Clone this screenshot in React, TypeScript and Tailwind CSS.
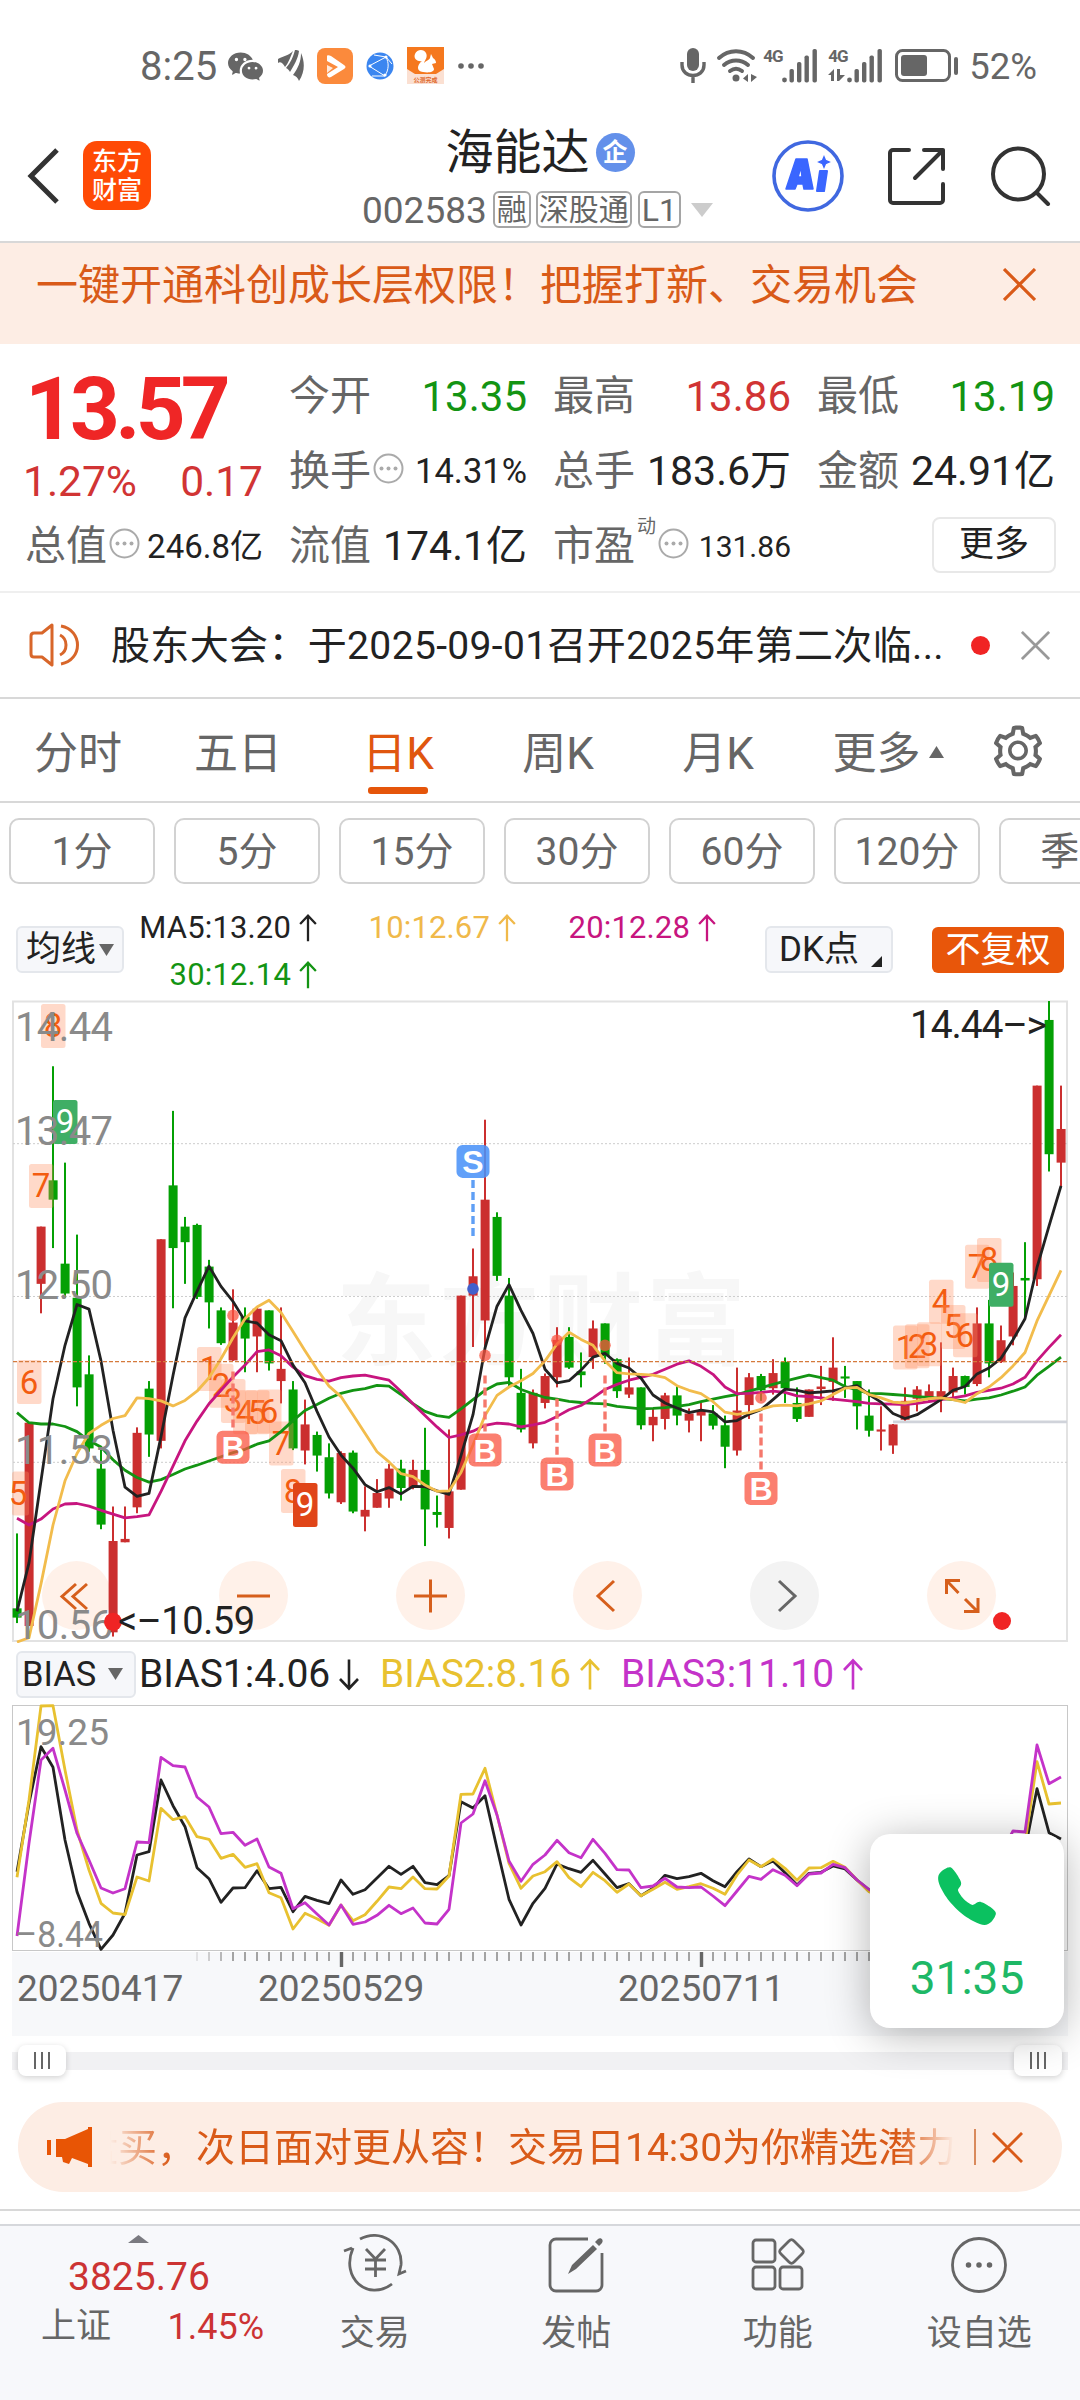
import React, { useState } from 'react';
import clsx from 'clsx';
import { AiOutlineSetting } from 'react-icons/ai';
import { BsWechat } from 'react-icons/bs';
import { IoCall } from 'react-icons/io5';

type Candle = [high: number, top: number, bottom: number, low: number, up: 0 | 1];

// chart values are stored on the plot's own vertical scale, one entry per trading day
const candles: Candle[] = [
  [1290, 1468, 1490, 1503, 0], [1027, 1027, 1510, 1510, 1], [561, 561, 697, 767, 1], [180, 451, 497, 612, 0],
  [409, 649, 720, 730, 0], [580, 730, 943, 988, 0], [867, 912, 1088, 1096, 0], [1090, 1136, 1269, 1280, 0],
  [1226, 1308, 1525, 1535, 1], [1226, 1303, 1311, 1311, 1], [1038, 1051, 1228, 1242, 1], [928, 946, 1055, 1108, 0],
  [591, 591, 1070, 1088, 1], [286, 463, 612, 755, 0], [538, 561, 598, 697, 0], [554, 557, 728, 733, 0],
  [640, 656, 741, 803, 0], [753, 760, 838, 842, 0], [710, 789, 879, 880, 1], [753, 775, 827, 907, 0],
  [753, 756, 822, 907, 1], [760, 760, 886, 903, 0], [753, 899, 928, 981, 1], [928, 948, 1088, 1092, 0],
  [972, 1031, 1093, 1126, 1], [1048, 1056, 1105, 1143, 0], [1076, 1109, 1195, 1207, 0], [1095, 1099, 1216, 1220, 1],
  [1093, 1098, 1238, 1242, 0], [1178, 1234, 1250, 1285, 1], [1161, 1194, 1229, 1229, 1], [1125, 1136, 1207, 1229, 1],
  [1115, 1136, 1182, 1212, 0], [1115, 1139, 1180, 1185, 1], [1039, 1139, 1233, 1320, 0], [1200, 1239, 1246, 1276, 0],
  [1043, 1190, 1277, 1302, 1], [725, 725, 1186, 1186, 1], [613, 679, 725, 847, 1], [307, 497, 784, 860, 1],
  [527, 538, 678, 690, 0], [683, 725, 919, 940, 0], [899, 956, 1043, 1050, 0], [948, 956, 1076, 1088, 1],
  [910, 916, 980, 993, 1], [800, 830, 919, 943, 1], [800, 823, 896, 899, 0], [860, 905, 914, 943, 0],
  [784, 803, 871, 899, 1], [791, 791, 869, 887, 0], [874, 876, 952, 968, 0], [872, 943, 960, 968, 1],
  [943, 943, 1033, 1043, 0], [993, 1013, 1033, 1071, 1], [956, 962, 1018, 1043, 1], [940, 962, 1010, 1033, 0],
  [993, 1005, 1022, 1050, 1], [980, 998, 1010, 1071, 1], [985, 1005, 1034, 1043, 0], [1010, 1033, 1084, 1135, 0],
  [896, 998, 1093, 1105, 1], [909, 919, 985, 1018, 1], [911, 916, 950, 975, 0], [876, 909, 945, 960, 1],
  [872, 882, 945, 980, 0], [943, 980, 1018, 1025, 0], [948, 948, 1013, 1013, 1], [892, 941, 947, 985, 1],
  [824, 896, 930, 975, 1], [892, 917, 922, 968, 0], [928, 928, 988, 1043, 0], [948, 1010, 1046, 1060, 0],
  [988, 1043, 1048, 1093, 1], [1030, 1031, 1081, 1101, 1], [943, 975, 1020, 1022, 1], [940, 948, 970, 1000, 1],
  [936, 952, 970, 975, 1], [836, 952, 968, 1002, 1], [896, 916, 955, 968, 1], [915, 916, 942, 960, 0],
  [753, 791, 935, 940, 1], [735, 791, 886, 919, 0], [796, 831, 883, 885, 1], [670, 702, 822, 843, 1],
  [598, 683, 689, 780, 0], [226, 226, 686, 702, 1], [25, 70, 389, 430, 0], [226, 329, 409, 465, 1],
];

const movingAverages = [
  {
    color: '#139413',
    values: [
      1003, 1027, 1030, 1030, 1036, 1048, 1070, 1085, 1115, 1140, 1157, 1168, 1162, 1150, 1137, 1128, 1118, 1108, 1098,
      1090, 1078, 1070, 1048, 1022, 998, 984, 969, 957, 950, 946, 938, 940, 960, 982, 1000, 1010, 1014, 994, 972, 950,
      935, 931, 948, 958, 967, 971, 976, 979, 981, 982, 988, 991, 994, 993, 991, 988, 984, 977, 971, 965, 960, 952, 944,
      936, 928, 921, 914, 920, 926, 941, 949, 957, 958, 960, 962, 965, 967, 969, 972, 975, 971, 968, 961, 952, 942, 914,
      893, 871,
    ],
  },
  {
    color: '#c7157f',
    values: [
      1254, 1270, 1256, 1232, 1220, 1219, 1225, 1235, 1244, 1253, 1250, 1246, 1190, 1130, 1070, 1023, 982, 950, 918, 890,
      858, 854, 868, 895, 915, 924, 928, 920, 916, 914, 920, 926, 953, 982, 1010, 1037, 1062, 1056, 1047, 1033, 1028,
      1030, 1037, 1032, 1026, 1012, 996, 986, 968, 948, 936, 926, 919, 912, 900, 888, 880, 893, 912, 942, 958, 957, 955,
      952, 955, 963, 965, 968, 971, 974, 977, 981, 982, 983, 984, 981, 977, 972, 968, 963, 955, 950, 945, 935, 919, 880,
      848, 818,
    ],
  },
  {
    color: '#222222',
    values: [
      1475, 1360, 1165, 970, 843, 746, 757, 880, 1045, 1180, 1202, 1195, 1060, 915, 778, 715, 655, 703, 739, 785, 790,
      818, 832, 890, 932, 1000, 1061, 1104, 1135, 1174, 1191, 1181, 1196, 1178, 1179, 1189, 1197, 1105, 1008, 850, 750,
      699, 760, 815, 900, 932, 927, 902, 871, 862, 886, 897, 921, 961, 980, 992, 1003, 997, 1001, 1025, 1022, 1007, 996,
      972, 947, 950, 956, 954, 951, 944, 939, 960, 978, 1005, 1017, 1008, 990, 972, 950, 941, 911, 897, 874, 830, 780,
      658, 560, 464,
    ],
  },
  {
    color: '#f2bc4c',
    values: [
      1548, 1538, 1410, 1270, 1165, 1100, 1052, 1033, 1017, 1010, 968, 970, 975, 987, 974, 952, 920, 875, 825, 780, 752,
      736, 765, 810, 856, 900, 940, 965, 1008, 1052, 1096, 1120, 1148, 1155, 1175, 1190, 1189, 1145, 1080, 1010, 962,
      942, 927, 910, 880, 840, 812, 829, 843, 880, 908, 911, 912, 914, 920, 939, 950, 958, 977, 1002, 1007, 1003, 995,
      987, 985, 987, 982, 975, 960, 945, 943, 960, 968, 978, 980, 975, 970, 968, 972, 979, 958, 942, 920, 892, 860, 785,
      725, 665,
    ],
  },
];

const biasLines = [
  {
    color: '#222222',
    values: [
      695, 490, 320, 382, 600, 755, 850, 928, 885, 820, 645, 635, 420, 497, 560, 683, 716, 787, 744, 743, 692, 746, 742,
      815, 769, 781, 791, 720, 763, 749, 714, 679, 703, 679, 728, 734, 707, 485, 504, 467, 625, 778, 855, 790, 745, 672,
      686, 697, 661, 702, 743, 731, 767, 745, 706, 716, 710, 700, 722, 740, 695, 657, 680, 663, 698, 735, 700, 697, 678,
      687, 720, 750, 770, 760, 750, 740, 730, 735, 730, 720, 700, 690, 680, 660, 630, 446, 578, 597,
    ],
  },
  {
    color: '#e8c130',
    values: [
      712, 480, 198, 197, 390, 570, 690, 790, 819, 824, 711, 723, 505, 539, 530, 590, 598, 655, 643, 682, 671, 758, 773,
      867, 820, 836, 856, 795, 842, 824, 784, 741, 746, 711, 746, 747, 708, 463, 462, 385, 525, 670, 745, 708, 695, 665,
      713, 740, 697, 722, 757, 732, 767, 748, 727, 748, 740, 731, 745, 763, 705, 660, 680, 657, 685, 721, 684, 683, 664,
      682, 720, 755, 770, 760, 750, 740, 730, 735, 730, 720, 700, 680, 660, 640, 610, 365, 492, 489,
    ],
  },
  {
    color: '#c433c9',
    values: [
      888, 610, 360, 325, 450, 580, 660, 744, 759, 746, 606, 608, 352, 377, 381, 471, 501, 581, 577, 616, 597, 681, 700,
      806, 788, 822, 855, 795, 853, 846, 826, 796, 821, 804, 849, 852, 808, 549, 522, 422, 525, 663, 724, 673, 645, 601,
      638, 653, 598, 640, 689, 690, 743, 738, 715, 741, 743, 741, 768, 797, 753, 709, 718, 689, 706, 737, 702, 699, 673,
      683, 720, 748, 770, 760, 750, 740, 730, 735, 730, 720, 700, 680, 640, 573, 576, 315, 431, 411,
    ],
  },
];

// [digit, day index, top, kind]
const countMarks: [number, number, number, string][] = [
  [5, 0, 1143, 'count'], [6, 1, 878, 'count'], [7, 2, 412, 'count'], [8, 3, 32, 'count'], [9, 4, 260, 'sell'],
  [1, 16, 847, 'count'], [2, 17, 887, 'count'], [3, 18, 923, 'count'], [4, 19, 950, 'count'], [5, 20, 950, 'count'],
  [6, 21, 948, 'count'], [7, 22, 1024, 'count'], [8, 23, 1137, 'count'], [9, 24, 1170, 'buy'],
  [1, 74, 796, 'count'], [2, 75, 793, 'count'], [3, 76, 788, 'count'], [4, 77, 687, 'count'], [5, 78, 747, 'count'],
  [6, 79, 767, 'count'], [7, 80, 604, 'count'], [8, 81, 588, 'count'], [9, 82, 647, 'sell'],
];

const trades = [
  { type: 'B', day: 18, dot: 772, from: 905, to: 1040, badge: 1085 },
  { type: 'S', day: 38, dot: 709, from: 450, to: 585, badge: 406 },
  { type: 'B', day: 39, dot: 867, from: 915, to: 1050, badge: 1092 },
  { type: 'B', day: 45, dot: 831, from: 970, to: 1105, badge: 1149 },
  { type: 'B', day: 49, dot: 843, from: 915, to: 1050, badge: 1092 },
  { type: 'B', day: 62, dot: 968, from: 1005, to: 1138, badge: 1183 },
];

const priceLabels: [string, number][] = [
  ['14.44', 120], ['13.47', 368], ['12.50', 734], ['11.53', 1124], ['10.56', 1542],
];

const dayX = (i: number) => 17 + i * 12;
const priceY = (v: number) => v / 2.376 - 9.5;
const biasY = (v: number) => v / 3 - 63;

const toPoints = (values: number[], scale: (v: number) => number) =>
  values.map((v, i) => `${dayX(i)},${scale(v).toFixed(1)}`).join(' ');

function Close({ size, className, stroke = 2.6 }: { size: number; className?: string; stroke?: number }) {
  return (
    <svg width={size} height={size} viewBox="0 0 32 32" className={className} fill="none" stroke="currentColor" strokeWidth={stroke}>
      <path d="M1 1 31 31M31 1 1 31" />
    </svg>
  );
}

function Arrow({ down, className }: { down?: boolean; className?: string }) {
  return (
    <svg viewBox="0 0 20 32" className={clsx(className, down && 'rotate-180')} fill="none" stroke="currentColor" strokeWidth="2.6">
      <path d="M10 31V2M1 11.500 10 2l9 9.500" />
    </svg>
  );
}

function Signal() {
  return (
    <svg width="36" height="34" viewBox="0 0 36 34" fill="#666">
      <circle cx="2.500" cy="31" r="2.400" />
      <rect x="7.500" y="20" width="4.400" height="13.500" rx="1.800" />
      <rect x="15" y="13" width="4.400" height="20.500" rx="1.800" />
      <rect x="22.500" y="6.500" width="4.400" height="27" rx="1.800" />
      <rect x="30.500" y="0" width="4.400" height="33.500" rx="1.800" />
    </svg>
  );
}

function StatusBar() {
  return (
    <div className="flex h-[112px] items-center pt-[22px] pl-[140px] text-[#666]">
      <span className="w-[88px] text-[40px] leading-none">8:25</span>
      <BsWechat className="-mt-[3px] h-[35px] w-[35px]" />
      <svg width="26" height="32" viewBox="0 0 26 32" className="-mt-[3px] ml-[15px]" fill="#666">
        <path d="M0 9C5 6 10 6 15 1 12 8 11 12 7 17 5 13 2 11 0 13Z" />
        <path d="M17 0c2 0 3 0 4 1-1 8-5 14-9 21-1-2-2-3-4-4 5-6 7-11 9-18Z" />
        <path d="M23 3c4 9 4 19-2 28-1-3-3-5-6-6 5-7 8-13 8-22Z" />
      </svg>
      <svg width="36" height="36" viewBox="0 0 36 36" className="-mt-[3px] ml-[13px]">
        <rect width="36" height="36" rx="8" fill="#fb8a3c" />
        <path d="M10 8v5l11 6-11 7c0 3 2 4 4 3l13-8c2-1 2-3 0-4L14 8c-2-1-4-1-4 0Z" fill="#fff" />
        <path d="M10 17v8l6-5Z" fill="#fff" opacity=".8" />
      </svg>
      <svg width="28" height="28" viewBox="0 0 28 28" className="-mt-[3px] ml-[13px]">
        <circle cx="14" cy="14" r="13.500" fill="#3b86f0" />
        <path d="M3 14 20 5M3 14l16 10M20 5c3 6 3 12-1 19M8 3l12 2 6 7M6 24l13 0" stroke="#fff" strokeWidth="1" fill="none" />
        <circle cx="4" cy="14" r="1.600" fill="#fff" />
        <circle cx="20" cy="5" r="1.600" fill="#fff" />
        <circle cx="19" cy="23" r="1.600" fill="#fff" />
      </svg>
      <div className="-mt-[3px] ml-[13px] h-[37px] w-[37px] bg-[#fbe0d2]">
        <svg width="37" height="37" viewBox="0 0 37 37">
          <path d="M0 0h37v22l-8 5H8l-8-5Z" fill="#f5781e" />
          <path d="M16 25C9 24 10 18 15 14 11 15 6 12 8 7c2-5 9-5 11-1 2 4-1 7-2 10 3-3 5-3 6-5l1-4 2 4c2 1 3 3 3 5l-4 1 2 5c0 3-5 4-11 3Z" fill="#fff" />
          <text x="18.500" y="35" fontSize="6" fontWeight="700" textAnchor="middle" fill="#e0682c">公测完成</text>
        </svg>
      </div>
      <svg width="26" height="6" viewBox="0 0 26 6" className="-mt-[3px] ml-[14px]" fill="#666">
        <circle cx="3" cy="3" r="2.800" />
        <circle cx="13" cy="3" r="2.800" />
        <circle cx="23" cy="3" r="2.800" />
      </svg>

      <svg width="26" height="35" viewBox="0 0 26 35" className="-mt-[3px] ml-auto" fill="none" stroke="#666" strokeWidth="3.400">
        <rect x="7" y="0" width="12" height="23" rx="6" fill="#666" stroke="none" />
        <path d="M2 14v3c0 14 22 14 22 0v-3M13 27v8" />
      </svg>
      <svg width="42" height="34" viewBox="0 0 42 34" className="-mt-[3px] ml-[10px]" fill="none" stroke="#666" strokeWidth="4" strokeLinecap="round">
        <path d="M3 9c10-9 24-9 34 0M8 16c7-6 17-6 24 0M14 22c4-3 8-3 12 0" />
        <circle cx="20" cy="29" r="3.500" fill="#666" stroke="none" />
        <path d="M27 29.500 32 25v8ZM35 25v8l6-5Z" fill="#666" stroke="none" />
      </svg>
      <div className="-mt-[3px] ml-[5px] h-[35px] w-[19px] text-[17px] leading-[17px] font-bold tracking-[-1px]">4G</div>
      <div className="-mt-[3px]">
        <Signal />
      </div>
      <div className="-mt-[3px] ml-[10px] h-[35px] w-[19px] text-[17px] leading-[17px] font-bold tracking-[-1px]">
        4G
        <svg width="18" height="13" viewBox="0 0 18 13" className="mt-[4px]" fill="#666">
          <path d="M0 6 6 0v12H3V6ZM9 0h3v6h5l-6 6H9Z" />
        </svg>
      </div>
      <div className="-mt-[3px]">
        <Signal />
      </div>
      <svg width="64" height="34" viewBox="0 0 64 34" className="-mt-[2px] ml-[12px]">
        <rect x="1.500" y="1.500" width="53" height="30" rx="6" fill="none" stroke="#666" strokeWidth="3" />
        <rect x="6" y="6" width="26" height="21" rx="3" fill="#666" />
        <rect x="59" y="8" width="4" height="18" rx="2" fill="#666" />
      </svg>
      <span className="mr-[43px] ml-[10px] text-[36.500px] leading-none">52%</span>
    </div>
  );
}

function Header() {
  return (
    <header className="flex h-[131px] items-start border-b-2 border-[#d8d8d8] pb-[2px]">
      <div className="flex h-[127px] w-[340px] items-center">
        <svg width="34" height="56" viewBox="0 0 34 56" className="ml-[26px]" fill="none" stroke="#333" strokeWidth="5">
          <path d="M31 2 5 28l26 26" />
        </svg>
        <div className="ml-[23px] flex h-[69px] w-[68px] flex-col items-center justify-center rounded-[14px] bg-[#ff4a05] text-[25px] leading-[29px] font-medium text-white">
          <span>东方</span>
          <span>财富</span>
        </div>
      </div>
      <div className="flex w-[400px] flex-col items-center pt-[11px]">
        <div className="flex h-[58px] items-center">
          <h1 className="pt-[2px] text-[48px] leading-none text-[#222]">海能达</h1>
          <span className="ml-[6px] flex h-[39px] w-[39px] items-center justify-center rounded-full bg-[#6390ea] text-[25px] leading-none font-bold text-white">
            企
          </span>
        </div>
        <div className="mt-[10px] -ml-[5px] flex h-[37px] items-center text-[#666]">
          <span className="pt-[1px] text-[37px] leading-none">002583</span>
          <span className="ml-[6px] flex h-[37px] items-center rounded-[6px] border-2 border-[#a5a5a5] px-[2px] text-[30px] leading-none">融</span>
          <span className="ml-[5px] flex h-[37px] items-center rounded-[6px] border-2 border-[#a5a5a5] px-[1px] text-[30px] leading-none">深股通</span>
          <span className="ml-[6px] flex h-[37px] items-center rounded-[6px] border-2 border-[#a5a5a5] px-[2px] text-[32px] leading-none">L1</span>
          <svg width="22" height="14" viewBox="0 0 22 14" className="ml-[10px]" fill="#ccc">
            <path d="M0 0h22L11 14Z" />
          </svg>
        </div>
      </div>
      <div className="flex h-[127px] w-[340px] items-center pl-[32px]">
        <svg width="72" height="72" viewBox="0 0 72 72">
          <circle cx="36" cy="36" r="34" fill="none" stroke="#4068e0" strokeWidth="3.600" />
          <path d="M24 19h11l6 30H32l-1-5h-6l-2 5H14ZM29 27l-3 10h4Z" fill="#3a66ff" fillRule="evenodd" stroke="#3a66ff" strokeWidth="1.500" strokeLinejoin="round" />
          <path d="M48 31h7l-3 20h-7Z" fill="#3a66ff" stroke="#3a66ff" strokeWidth="2" strokeLinejoin="round" />
          <path d="m52 17 1.500 3.500 3.500 1.500-3.500 1.500-1.500 3.500-1.500-3.500-3.500-1.500 3.500-1.500Z" fill="#3a66ff" stroke="#3a66ff" strokeWidth="1.500" />
        </svg>
        <svg width="60" height="60" viewBox="0 0 60 60" className="ml-[43px]" fill="none" stroke="#333" strokeWidth="4" strokeLinecap="round" strokeLinejoin="round">
          <path d="M22 4H6a3 3 0 0 0-3 3v47a3 3 0 0 0 3 3h47a3 3 0 0 0 3-3V38M37 4h19v19M56 4 28 32" />
        </svg>
        <svg width="60" height="60" viewBox="0 0 60 60" className="ml-[44px]" fill="none" stroke="#333" strokeWidth="4" strokeLinecap="round">
          <circle cx="27.500" cy="28" r="25.500" />
          <path d="m46 47 11 11" />
        </svg>
      </div>
    </header>
  );
}

function InfoDot() {
  return (
    <svg width="31" height="31" viewBox="0 0 31 31" className="-mt-[7px] ml-[2px] shrink-0" fill="#aaa">
      <circle cx="15.500" cy="15.500" r="14" fill="none" stroke="#aaa" strokeWidth="2" />
      <circle cx="8.500" cy="15.500" r="2" />
      <circle cx="15.500" cy="15.500" r="2" />
      <circle cx="22.500" cy="15.500" r="2" />
    </svg>
  );
}

interface QuoteProps {
  label: string;
  value: string;
  className?: string;
  info?: boolean;
  sup?: string;
}

function Quote({ label, value, className, info, sup }: QuoteProps) {
  return (
    <div className="flex items-center whitespace-nowrap">
      <span className="text-[41px] leading-none text-[#666]">{label}</span>
      {sup && <span className="mb-[40px] ml-[2px] text-[19px] leading-none text-[#666]">{sup}</span>}
      {info && <InfoDot />}
      <span className={clsx('ml-auto leading-none', className)}>{value}</span>
    </div>
  );
}

function Quotes() {
  return (
    <section className="grid h-[249px] grid-cols-4 grid-rows-[75px_75px_75px] gap-x-[26px] border-b-2 border-[#efefef] px-[25px] pt-[15px]">
      <div className="row-span-2 pt-[7px]">
        <div className="text-[87px] leading-[86px] font-bold tracking-[-4.800px] text-[#ef2626]">13.57</div>
        <div className="flex h-[60px] items-center justify-between text-[42.500px] text-[#d13434]">
          <span className="-ml-[2px]">1.27%</span>
          <span>0.17</span>
        </div>
      </div>
      <Quote label="今开" value="13.35" className="text-[42px] text-[#139413]" />
      <Quote label="最高" value="13.86" className="text-[42px] text-[#d13434]" />
      <Quote label="最低" value="13.19" className="text-[42px] text-[#139413]" />
      <Quote label="换手" value="14.31%" info className="text-[34.500px] text-[#222]" />
      <Quote label="总手" value="183.6万" className="text-[41px] text-[#222]" />
      <Quote label="金额" value="24.91亿" className="text-[41px] text-[#222]" />
      <Quote label="总值" value="246.8亿" info className="text-[33px] text-[#222]" />
      <Quote label="流值" value="174.1亿" className="text-[41px] text-[#222]" />
      <Quote label="市盈" value="131.86" info sup="动" className="text-[30px] text-[#222]" />
      <div className="flex items-center justify-end">
        <button className="mr-[-1px] mb-[4px] h-[56px] w-[124px] rounded-[8px] border-2 border-[#e8e8e8] text-[35px] leading-none text-[#222]">更多</button>
      </div>
    </section>
  );
}

function Notice() {
  return (
    <div className="flex h-[106px] items-center border-b-2 border-[#d8d8d8] pl-[29px]">
      <svg width="52" height="44" viewBox="0 0 52 44" fill="none" stroke="#d8662a" strokeWidth="3" strokeLinejoin="round">
        <path d="M23 2 13 10H5c-2 0-3 1-3 3v18c0 2 1 3 3 3h8l10 8Z" />
        <path d="M31 12c8 4 8 16 0 20M32 3c22 4 22 34 0 38" />
      </svg>
      <p className="ml-[30px] w-[843px] pt-[2px] text-[39px] leading-none tracking-[0.350px] whitespace-nowrap text-[#222]">股东大会：于2025-09-01召开2025年第二次临...</p>
      <span className="ml-[17px] h-[19px] w-[19px] rounded-full bg-[#f02424]" />
      <Close size={29} className="ml-[31px] text-[#999]" stroke={3} />
    </div>
  );
}

const tabs = ['分时', '五日', '日K', '周K', '月K'];
const periods = ['1分', '5分', '15分', '30分', '60分', '120分', '季K'];

function Tabs() {
  const [active, setActive] = useState('日K');
  return (
    <nav className="flex h-[104px] border-b-2 border-[#d8d8d8] text-[44px] text-[#666]">
      {tabs.map(tab => (
        <button
          key={tab}
          onClick={() => setActive(tab)}
          className={clsx('-ml-[2px] mr-[2px] flex w-[160px] flex-col items-center pt-[28px] leading-[54px]', tab === active && 'text-[#e0560f]')}
        >
          {tab}
          {tab === active && <span className="mt-[6px] h-[7px] w-[60px] rounded-[3px] bg-[#e5550a]" />}
        </button>
      ))}
      <button className="flex w-[176px] items-start justify-center pt-[28px] leading-[54px]">
        更多
        <svg width="15" height="12" viewBox="0 0 15 12" className="mt-[19px] ml-[8px]" fill="#666">
          <path d="M7.500 0 15 12H0Z" />
        </svg>
      </button>
      <AiOutlineSetting className="mt-[23px] ml-[13px] h-[58px] w-[58px]" />
    </nav>
  );
}

function Periods() {
  return (
    <div className="flex gap-[19px] overflow-hidden pt-[15px] pl-[9px] text-[39px] text-[#666]">
      {periods.map(p => (
        <button key={p} className="h-[66px] w-[146px] shrink-0 rounded-[10px] border-2 border-[#d2d2d2] pt-[3px] leading-none">
          {p}
        </button>
      ))}
    </div>
  );
}

function MaItem({ text, className }: { text: string; className: string }) {
  return (
    <span className={clsx('flex items-center justify-end gap-[7px]', className)}>
      {text}
      <Arrow className="h-[28px] w-[20px]" />
    </span>
  );
}

function Indicators() {
  return (
    <div className="flex h-[116px] items-start pl-[16px]">
      <button className="mt-[42px] flex h-[47px] w-[108px] items-center rounded-[6px] border-2 border-[#e4e7ec] bg-[#f6f7fa] pl-[8px] text-[35px] leading-none text-[#222]">
        均线
        <svg width="15" height="12" viewBox="0 0 15 12" className="ml-[3px]" fill="#666">
          <path d="M0 0h15L7.500 12Z" />
        </svg>
      </button>
      <div className="mt-[20px] ml-[13px] grid w-[580px] grid-cols-[181px_199px_200px] text-[31px] leading-[47px] tracking-[0.150px]">
        <MaItem text="MA5:13.20" className="text-[#222]" />
        <MaItem text="10:12.67" className="text-[#f0b94a]" />
        <MaItem text="20:12.28" className="text-[#c7157f]" />
        <MaItem text="30:12.14" className="text-[#139413]" />
      </div>
      <button className="mt-[42px] ml-[48px] flex h-[47px] w-[128px] items-center rounded-[6px] border-2 border-[#e4e7ec] bg-[#f6f7fa] pl-[12px] text-[35px] leading-none text-[#222]">
        DK点
        <svg width="11" height="11" viewBox="0 0 11 11" className="mt-[24px] ml-[12px]" fill="#222">
          <path d="M11 0v11H0Z" />
        </svg>
      </button>
      <button className="mt-[43px] ml-[39px] h-[46px] w-[132px] rounded-[6px] bg-[#e8560a] text-[35px] leading-none text-white">不复权</button>
    </div>
  );
}

function ChartControls() {
  const icons = [
    <path d="M34 23 20 35.500l14 12.500M45 23 31 35.500l14 12.500" />,
    <path d="M18 35h33" />,
    <path d="M18 35h33M34.500 18.500v33" />,
    <path d="M41 20 25 35l16 15" />,
    <path d="M29 20l16 15-16 15" />,
    <path d="M19.500 33V19.500H33M20 20l11.500 12M51 37v13.500H37M50 50 38 38" />,
  ];
  return (
    <div className="absolute top-[561px] left-[42px] flex gap-[108px]">
      {icons.map((icon, i) => (
        <button key={i} className={clsx('h-[69px] w-[69px] rounded-full', i === 4 ? 'bg-[#f3f3f3]' : 'bg-[#fff1e9]')}>
          <svg viewBox="0 0 69 69" fill="none" stroke={i === 4 ? '#666' : '#d65f1c'} strokeWidth="3">
            {icon}
          </svg>
        </button>
      ))}
      <span className="absolute top-[51px] right-[-15px] h-[18px] w-[18px] rounded-full bg-[#f02424]" />
    </div>
  );
}

const markFill: Record<string, string> = { sell: '#3fae65', buy: '#e04518' };

function KLineChart() {
  return (
    <div className="relative h-[643px]">
      <ChartControls />
      <svg width="1080" height="643" viewBox="0 0 1080 643" className="pointer-events-none relative">
        <text x="336" y="357" fontSize="100" fontWeight="700" textLength="410" fill="#f7f7f7">东方财富</text>
        <rect x="13" y="1.500" width="1054" height="639.500" fill="none" stroke="#e2e2e2" strokeWidth="2" />
        {[364, 727, 1121].map(v => (
          <line key={v} x1="13" x2="1067" y1={priceY(v)} y2={priceY(v)} stroke="#ccc" strokeDasharray="2 2" />
        ))}
        <line x1="893" x2="1067" y1={priceY(1025)} y2={priceY(1025)} stroke="#d0d3da" strokeWidth="2.600" />

        {candles.map(([high, top, bottom, low, up], i) => (
          <g key={i} fill={up ? '#cb2f2f' : '#04a004'}>
            <rect x={dayX(i) - 1} y={priceY(high)} width="2" height={priceY(low) - priceY(high)} />
            <rect x={dayX(i) - 4.4} y={priceY(top)} width="9" height={priceY(bottom) - priceY(top)} />
          </g>
        ))}

        {countMarks.map(([n, day, top, kind], i) => (
          <g key={i}>
            <rect
              x={Math.max(dayX(day) - 12, 12)}
              y={priceY(top)}
              width={day === 0 ? 17 : 24.5}
              height="44"
              rx="2.500"
              fill={markFill[kind] ?? '#ff9060'}
              fillOpacity={kind === 'count' ? 0.34 : 1}
            />
            <text x={dayX(day) + (day === 0 ? 1 : 0)} y={priceY(top) + 33.5} fontSize="33" textAnchor="middle" fill={kind === 'count' ? '#f35c10' : '#fff'}>
              {n}
            </text>
          </g>
        ))}

        {movingAverages.map(line => (
          <polyline key={line.color} points={toPoints(line.values, priceY)} fill="none" stroke={line.color} strokeWidth="2.800" strokeLinejoin="round" />
        ))}
        <line x1="13" x2="1067" y1={priceY(882)} y2={priceY(882)} stroke="#d57a3c" strokeWidth="1.300" strokeDasharray="4 2" />

        {trades.map(t => {
          const x = dayX(t.day);
          const sell = t.type === 'S';
          return (
            <g key={t.day} fill={sell ? '#4a92f8' : '#f95440'}>
              <line x1={x} x2={x} y1={priceY(t.from)} y2={priceY(t.to)} stroke={sell ? '#5f9ff5' : '#f5786c'} strokeWidth="3.400" strokeDasharray="8 4" />
              <circle cx={x} cy={priceY(t.dot)} r="5.800" fill={sell ? '#4160cc' : '#f95440'} fillOpacity={sell ? 1 : 0.75} />
              <rect x={x - 16.5} y={priceY(t.badge) - 16.5} width="33" height="33" rx="6" fillOpacity={sell ? 0.87 : 0.75} />
              <text x={x} y={priceY(t.badge) + 11.5} fontSize="32" fontWeight="700" textAnchor="middle" fill="#fff" fontFamily="Liberation Sans, sans-serif">
                {t.type}
              </text>
            </g>
          );
        })}

        {priceLabels.map(([label, y]) => (
          <text key={label} x="15" y={priceY(y)} fontSize="40" fill="#8a8a8a" textLength="98">{label}</text>
        ))}
        <circle cx="113" cy={priceY(1500)} r="9" fill="#f02424" />
        <text x="118" y={priceY(1529)} fontSize="38" textLength="137" fill="#222">&lt;–10.59</text>
        <text x="910" y={priceY(114)} fontSize="39" textLength="137" fill="#222">14.44–&gt;</text>
      </svg>
    </div>
  );
}

function BiasChart() {
  return (
    <>
      <div className="flex h-[60px] items-center pt-[2px] pl-[16px] text-[39px] leading-none">
        <button className="flex h-[47px] w-[120px] items-center rounded-[6px] border-2 border-[#e4e7ec] bg-[#f6f7fa] pl-[4px] text-[34.500px] leading-none text-[#222]">
          BIAS
          <svg width="15" height="12" viewBox="0 0 15 12" className="ml-[12px]" fill="#666">
            <path d="M0 0h15L7.500 12Z" />
          </svg>
        </button>
        <span className="ml-[3px] flex w-[241px] items-center text-[#222]">
          BIAS1:4.06
          <Arrow down className="ml-[9px] h-[35px] w-[20px]" />
        </span>
        <span className="flex w-[241px] items-center text-[#e8c130]">
          BIAS2:8.16
          <Arrow className="ml-[9px] h-[35px] w-[20px]" />
        </span>
        <span className="flex items-center text-[#c433c9]">
          BIAS3:11.10
          <Arrow className="ml-[9px] h-[35px] w-[20px]" />
        </span>
      </div>
      <svg width="1080" height="249" viewBox="0 0 1080 249" className="block">
        <rect x="12.500" y="2.500" width="1055" height="245" fill="none" stroke="#c8c8c8" />
        {biasLines.map(line => (
          <polyline key={line.color} points={toPoints(line.values, biasY)} fill="none" stroke={line.color} strokeWidth="2.800" strokeLinejoin="round" />
        ))}
        <text x="16" y="42" fontSize="37" fill="#8a8a8a">19.25</text>
        <text x="15" y="244" fontSize="36" textLength="88" lengthAdjust="spacingAndGlyphs" fill="#8a8a8a">–8.44</text>
      </svg>
    </>
  );
}

function DateAxis() {
  return (
    <div className="mx-[12px] h-[84px] bg-[#f7f8fa] text-[37px] text-[#666]">
      <svg width="1056" height="16" viewBox="12 0 1056 16" className="block">
        {candles.map((_, i) => {
          if (i < 15) return null;
          const major = i === 27 || i === 57;
          return (
            <rect
              key={i}
              x={dayX(i) - (major ? 1.2 : 0.9)}
              y="0"
              width={major ? 3.4 : 1.8}
              height={major ? 15 : 9}
              fill={major ? '#666' : '#999'}
              opacity={Math.min(1, (i - 14) / 4)}
            />
          );
        })}
      </svg>
      <div className="flex pl-[5px] leading-[42px]">
        <span className="w-[241px]">20250417</span>
        <span className="w-[360px]">20250529</span>
        <span>20250711</span>
      </div>
    </div>
  );
}

function Grip() {
  return (
    <div className="flex h-[31px] w-[48px] items-center justify-center gap-[5px] rounded-[8px] bg-white shadow-[0_2px_6px_rgba(0,0,0,0.18)]">
      <i className="h-[17px] w-[2px] bg-[#666]" />
      <i className="h-[17px] w-[2px] bg-[#666]" />
      <i className="h-[17px] w-[2px] bg-[#666]" />
    </div>
  );
}

function Promo() {
  return (
    <div className="mx-[18px] mt-[26px] flex h-[90px] items-center rounded-full bg-[#fdede4] pl-[29px] text-[#d95a18]">
      <svg width="46" height="40" viewBox="0 0 46 40" fill="#e85505">
        <path d="M0 13h4v15H0ZM9 12h9L41 2V0h4v40h-4v-3l-16-6-3 6-6-2-1-5H9Z" />
      </svg>
      <div className="ml-[17px] w-[844px] overflow-hidden mask-[linear-gradient(90deg,transparent_0,black_60px,black_790px,transparent)]">
        <p className="-ml-[31px] pt-[1px] text-[39px] leading-[60px] whitespace-nowrap">盘买，次日面对更从容！交易日14:30为你精选潜力</p>
      </div>
      <span className="ml-[20px] h-[36px] w-[2px] bg-[#d98a5c]" />
      <Close size={31} className="ml-[16px]" stroke={3} />
    </div>
  );
}

const navIcons = {
  trade: (
    <>
      <path d="M19 6C39-5 62 10 60 32l-2 9 7-3M11 15 3 18M12 15C-1 45 27 69 51 51M12 15l-2 6" />
      <path d="M25 16l9.500 10L44 16M24 27h21M24 36h21M34.500 26v18" />
    </>
  ),
  post: (
    <>
      <path d="M46 6H14a6 6 0 0 0-6 6v40a6 6 0 0 0 6 6h40a6 6 0 0 0 6-6V20" />
      <path d="m26 41 4-9 21-20 4 4-21 20ZM53 9l3-3c3-2 6 1 4 4l-3 3Z" fill="#666" stroke="none" />
    </>
  ),
  features: (
    <>
      <rect x="9" y="7" width="22" height="22" rx="3" />
      <rect x="9" y="34" width="22" height="22" rx="3" />
      <rect x="36" y="34" width="22" height="22" rx="3" />
      <path d="M45 8c2-2 3-2 5 0l8 8c2 2 2 3 0 5l-8 8c-2 2-3 2-5 0l-8-8c-2-2-2-3 0-5Z" />
    </>
  ),
  more: (
    <>
      <circle cx="34" cy="32" r="26.500" />
      <path d="M23.500 32h.01M34 32h.01M44.500 32h.01" strokeWidth="5.500" strokeLinecap="round" />
    </>
  ),
};

const navItems: [string, React.ReactNode][] = [
  ['交易', navIcons.trade],
  ['发帖', navIcons.post],
  ['功能', navIcons.features],
  ['设自选', navIcons.more],
];

function BottomNav() {
  return (
    <footer className="flex h-[176px] border-t-2 border-[#d6d8dc] bg-[#f7f8fb] text-[#666]">
      <div className="flex w-[274px] flex-col pt-[9px]">
        <svg width="21" height="8" viewBox="0 0 21 8" className="ml-[128px]" fill="#7a7a80">
          <path d="M10.500 0 21 8H0Z" />
        </svg>
        <span className="ml-[68px] pt-[9px] text-[39px] leading-[50px] text-[#cc3333]">3825.76</span>
        <div className="flex justify-between pr-[10px] pl-[41px] text-[35px] leading-[50px]">
          <span>上证</span>
          <span className="text-[36px] text-[#cc3333]">1.45%</span>
        </div>
      </div>
      {navItems.map(([label, icon]) => (
        <button key={label} className="flex w-[201.500px] flex-col items-center pt-[7px]">
          <svg width="68" height="66" viewBox="0 0 68 66" fill="none" stroke="#666" strokeWidth="2.800">
            {icon}
          </svg>
          <span className="mt-[12px] text-[35px] leading-[46px]">{label}</span>
        </button>
      ))}
    </footer>
  );
}

export default function App() {
  return (
    <div className="relative h-[2400px] w-[1080px] overflow-hidden bg-white font-[Roboto,'Noto_Sans_CJK_SC',sans-serif]">
      <StatusBar />
      <Header />
      <div className="flex h-[101px] items-center bg-[#fdede4] pr-[44px] pb-[16px] pl-[36px] text-[#d95a18]">
        <p className="pt-[1px] text-[42px] leading-none">一键开通科创成长层权限！把握打新、交易机会</p>
        <Close size={33} className="mt-[-3px] ml-auto" stroke={3} />
      </div>
      <Quotes />
      <Notice />
      <Tabs />
      <Periods />
      <Indicators />
      <KLineChart />
      <BiasChart />
      <DateAxis />
      <div className="mx-[12px] mt-[9px] flex h-[31px] items-center justify-between bg-[linear-gradient(#f1f1f3,#f1f1f3)] bg-[length:100%_18px] bg-center bg-no-repeat px-[6px]">
        <Grip />
        <Grip />
      </div>
      <Promo />
      <div className="mt-[17px] h-[15px] border-t-2 border-[#d8d8d8]" />
      <BottomNav />

      <div className="absolute top-[1834px] left-[870px] flex h-[194px] w-[194px] flex-col items-center rounded-[20px] bg-white pt-[29px] shadow-[0_6px_44px_rgba(0,0,0,0.3)]">
        <IoCall className="h-[66px] w-[66px] text-[#0bc160]" />
        <span className="mt-[21px] text-[46px] leading-[56px] text-[#1eb866]">31:35</span>
      </div>
    </div>
  );
}
